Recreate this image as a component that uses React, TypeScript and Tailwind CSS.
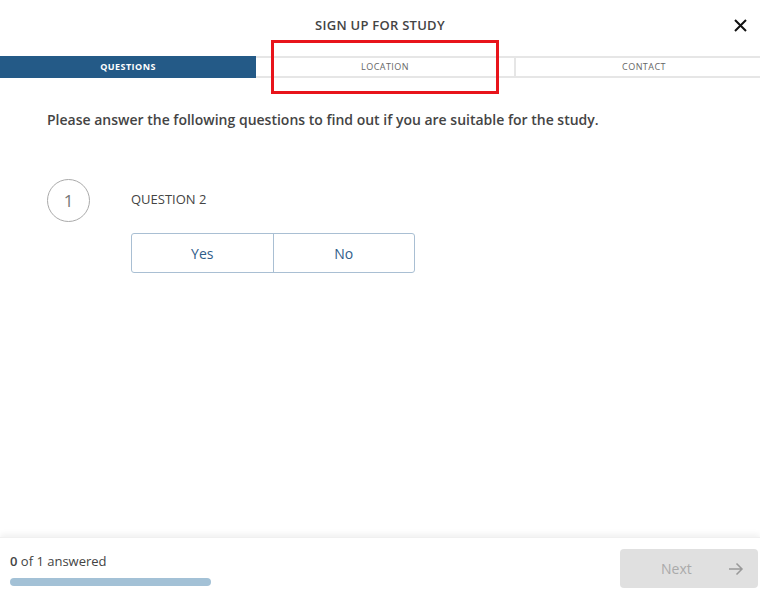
import React from "react";

export default function App() {
  return (
    <div className="relative w-[760px] h-[590px] bg-white flex flex-col overflow-hidden" style={{ fontFamily: "'Open Sans', 'Liberation Sans', sans-serif" }}>
      <div className="h-[51px] flex items-center justify-center relative">
        <span className="text-[13px] font-semibold text-[#444] tracking-[0.02em] mt-[1px]">SIGN UP FOR STUDY</span>
        <svg className="absolute right-[13px] top-[19px]" width="13" height="13" viewBox="0 0 13 13">
          <path d="M1 1L12 12M12 1L1 12" stroke="#111" strokeWidth="2" />
        </svg>
      </div>
      <div className="mt-[5px] flex h-[22px] border-y-2 border-[#e6e6e6] text-[9px] tracking-[0.05em]">
        <div className="w-[256px] -my-[2px] bg-[#245a87] text-white font-bold flex items-center justify-center">QUESTIONS</div>
        <div className="w-[260px] border-r-2 border-[#e6e6e6] text-[#666] flex items-center justify-center">LOCATION</div>
        <div className="flex-1 text-[#666] flex items-center justify-center pl-[12px]">CONTACT</div>
      </div>
      <div className="absolute left-[271px] top-[40px] w-[228px] h-[54px] border-[3px] border-[#e8141b]" />
      <div className="pl-[47px] pt-[31px] text-[14px] font-semibold text-[#444]">
        Please answer the following questions to find out if you are suitable for the study.
      </div>
      <div className="flex pl-[47px] pt-[49px] gap-[41px]">
        <div className="w-[43px] h-[43px] rounded-full border border-[#aaa] flex items-center justify-center text-[17px] text-[#777]">1</div>
        <div className="flex flex-col">
          <div className="text-[13px] text-[#444] pt-[11px] h-[54px]">QUESTION 2</div>
          <div className="flex w-[284px] h-[40px] border border-[#a9bfd3] rounded-[3px] text-[14px] text-[#2f5d8a]">
            <div className="flex-1 flex items-center justify-center border-r border-[#a9bfd3]">Yes</div>
            <div className="flex-1 flex items-center justify-center">No</div>
          </div>
        </div>
      </div>
      <div className="flex-1" />
      <div className="h-[53px] shadow-[0_-3px_6px_rgba(0,0,0,0.06)] border-t border-[#f0f0f0] flex items-start justify-between pl-[10px] pr-[2px]">
        <div className="flex flex-col gap-[6px] pt-[14px]">
          <div className="text-[13px] text-[#444]"><span className="font-semibold">0</span> of 1 answered</div>
          <div className="w-[201px] h-[8px] rounded-full bg-[#a3c1d6]" />
        </div>
        <div className="w-[138px] h-[39px] mt-[11px] bg-[#e0e0e0] rounded-[4px] flex items-center text-[14px] text-[#aaa]">
          <span className="ml-[41px]">Next</span>
          <svg className="ml-auto mr-[14px]" width="16" height="14" viewBox="0 0 16 14">
            <path d="M1 7H14M8.5 1.5L14 7L8.5 12.5" stroke="#999" strokeWidth="1.5" fill="none" />
          </svg>
        </div>
      </div>
    </div>
  );
}
